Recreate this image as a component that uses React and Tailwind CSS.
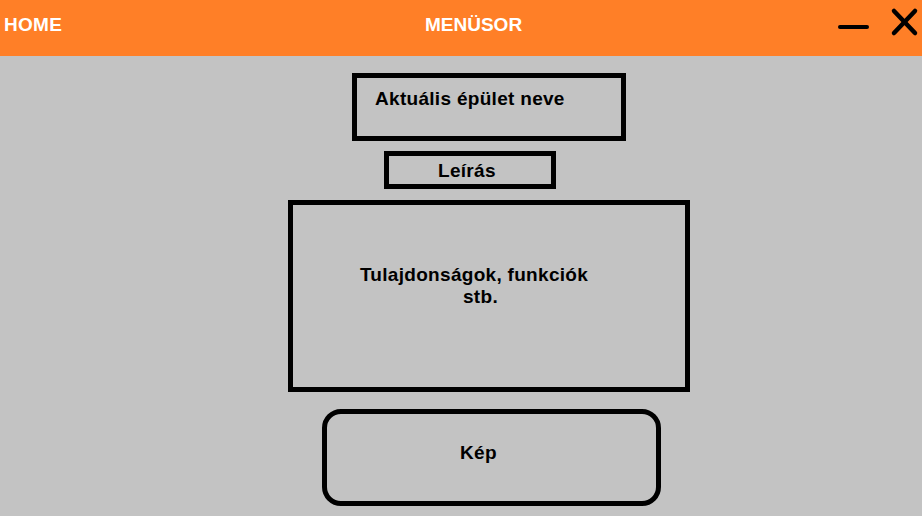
export default function App() {
  return (
    <div
      className="w-[922px] h-[516px] overflow-hidden flex flex-col bg-[#c3c3c3] tracking-[0.3px]"
      style={{ fontFamily: '"Liberation Sans", Arial, sans-serif' }}
    >
      <header className="h-[56px] shrink-0 bg-[#ff7f27] flex items-start">
        <div className="w-[425px] pl-[4px] pt-[15px] text-[19px] leading-[20px] font-bold text-white">
          HOME
        </div>
        <div className="pt-[15px] text-[19px] leading-[20px] font-bold text-white tracking-[0px]">MENÜSOR</div>
        <svg
          className="ml-auto"
          width="84"
          height="56"
          viewBox="838 0 84 56"
          fill="none"
          stroke="#000"
          strokeLinecap="round"
        >
          <line x1="840" y1="27" x2="867" y2="27" strokeWidth="4" />
          <line x1="894" y1="11" x2="915" y2="33" strokeWidth="4.5" />
          <line x1="915" y1="11" x2="894" y2="33" strokeWidth="4.5" />
        </svg>
      </header>
      <main className="flex flex-col items-start text-black font-bold text-[19px] leading-[20px]">
        <div className="mt-[17px] ml-[352px] w-[274px] h-[68px] border-[5px] border-black pl-[18px] pt-[11px]">
          Aktuális épület neve
        </div>
        <div className="mt-[10px] ml-[384px] w-[172px] h-[38px] border-[5px] border-black pl-[49px] pt-[5px]">
          Leírás
        </div>
        <div className="mt-[11px] ml-[288px] w-[402px] h-[192px] border-[5px] border-black pt-[59px]">
          <div className="ml-[61px] w-[240px] text-center leading-[22px]">
            <div>Tulajdonságok, funkciók</div>
            <div className="pl-[13px]">stb.</div>
          </div>
        </div>
        <div className="mt-[17px] ml-[322px] w-[339px] h-[97px] border-[5px] border-black rounded-[19px] pl-[133px] pt-[29px]">
          Kép
        </div>
      </main>
    </div>
  );
}
